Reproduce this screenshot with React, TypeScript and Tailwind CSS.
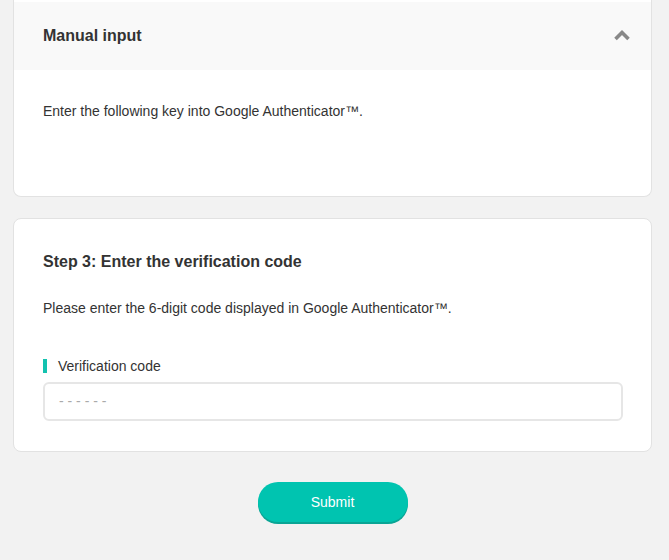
import React from "react";

export default function App() {
  return (
    <div
      className="min-h-[560px] w-full bg-[#f2f2f2] pl-[13px] pr-[17px] text-[#333]"
      style={{ fontFamily: '"Liberation Sans", Arial, sans-serif' }}
    >
      <div className="overflow-hidden rounded-b-[8px] border-x border-b border-[#e2e2e2] bg-white pt-[2px]">
        <div className="flex h-[68px] items-center justify-between bg-[#f9f9f9] pl-[29px] pr-[20px]">
          <div className="text-[16px] font-bold leading-[24px] text-[#333]">Manual input</div>
          <svg width="18" height="12" viewBox="0 0 18 12" className="mb-[2px]">
            <path d="M2.5 10 L9 3.5 L15.5 10" fill="none" stroke="#888" strokeWidth="3.6" />
          </svg>
        </div>
        <div className="h-[126px] pl-[29px] pt-[31px] text-[14px] leading-[20px]">
          Enter the following key into Google Authenticator™.
        </div>
      </div>

      <div className="mt-[21px] rounded-[8px] border border-[#e2e2e2] bg-white px-[29px] pb-[30px] pt-[31px]">
        <div className="text-[16px] font-bold leading-[24px]">Step 3: Enter the verification code</div>
        <div className="mt-[24px] text-[14px] leading-[20px]">
          Please enter the 6-digit code displayed in Google Authenticator™.
        </div>
        <div className="mt-[38px] flex items-center text-[14px] leading-[20px]">
          <span className="mr-[11px] inline-block h-[14px] w-[4px] bg-[#13c2af]" />
          <span>Verification code</span>
        </div>
        <div className="mt-[6px] flex h-[39px] w-[580px] items-center rounded-[6px] border-2 border-[#e6e6e6] bg-white pl-[14px]">
          <span className="text-[14px] tracking-[0px] text-[#aaa]">- - - - - -</span>
        </div>
      </div>

      <div className="mt-[30px] flex justify-center">
        <button className="h-[40px] w-[150px] rounded-full bg-[#00c4b0] text-[14px] text-white shadow-[0_2px_0_#0aa595]">
          Submit
        </button>
      </div>
    </div>
  );
}
